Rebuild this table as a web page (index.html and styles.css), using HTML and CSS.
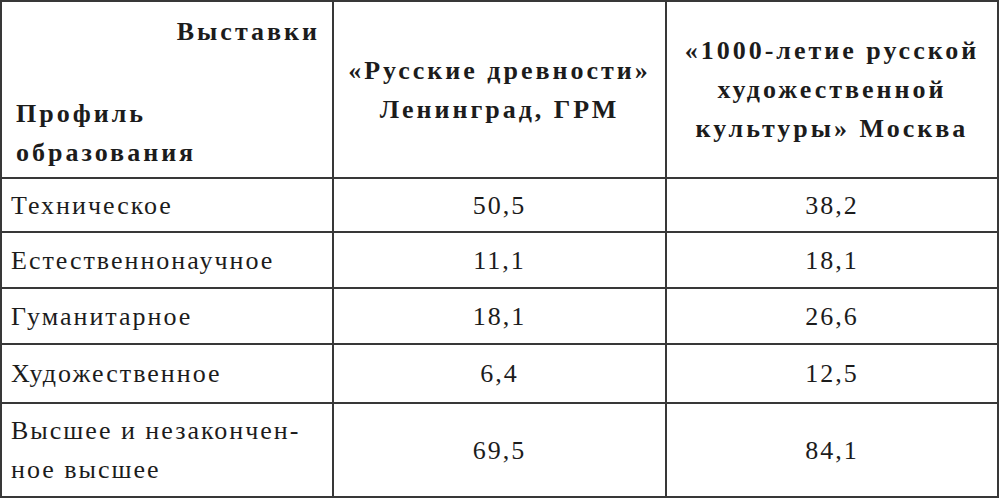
FILE: index.html
```html
<!DOCTYPE html>
<html>
<head>
<meta charset="utf-8">
<link rel="stylesheet" href="styles.css">
</head>
<body>
<div class="sheet">
  <div class="cell corner">
    <div class="corner-top">Выставки</div>
    <div class="corner-bottom">Профиль<br>образования</div>
  </div>
  <div class="cell title">«Русские древности»<br>Ленинград, ГРМ</div>
  <div class="cell title">«1000-летие русской<br>художественной<br>культуры» Москва</div>

  <div class="cell name">Техническое</div>
  <div class="cell num">50,5</div>
  <div class="cell num">38,2</div>

  <div class="cell name">Естественнонаучное</div>
  <div class="cell num">11,1</div>
  <div class="cell num">18,1</div>

  <div class="cell name">Гуманитарное</div>
  <div class="cell num">18,1</div>
  <div class="cell num">26,6</div>

  <div class="cell name">Художественное</div>
  <div class="cell num">6,4</div>
  <div class="cell num">12,5</div>

  <div class="cell name two">Высшее и незакончен-<br>ное высшее</div>
  <div class="cell num">69,5</div>
  <div class="cell num">84,1</div>
</div>
</body>
</html>
```
FILE: styles.css
```css
body {
  margin: 0;
  font-size: 26px;
  color: #1c1c1c;
}
.sheet {
  display: grid;
  width: 995px;
  grid-template-columns: 330px 331px 330px;
  grid-template-rows: 175px 52px 54px 54px 57px 92px;
  gap: 2px;
  padding: 2px;
  background: #383838;
}
.cell {
  background: #fff;
  font-family: "Liberation Serif";
  font-size: 26px;
  letter-spacing: 2px;
  line-height: 33px;
  color: #1c1c1c;
  display: flex;
  align-items: center;
}
.corner {
  display: block;
  font-weight: bold;
  letter-spacing: 3px;
  line-height: 39px;
}
.corner-top {
  text-align: right;
  padding: 10px 12px 0 0;
}
.corner-bottom {
  padding: 43px 0 0 14px;
}
.title {
  justify-content: center;
  text-align: center;
  font-weight: bold;
  letter-spacing: 3px;
  line-height: 39px;
}
.name {
  padding-left: 9px;
}
.two {
  line-height: 39px;
}
.num {
  justify-content: center;
}
```
